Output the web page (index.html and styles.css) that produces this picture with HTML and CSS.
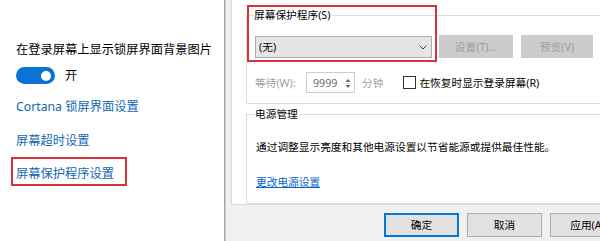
FILE: index.html
```html
<!DOCTYPE html>
<html lang="zh-CN">
<head>
<meta charset="utf-8">
<title>屏幕保护程序设置</title>
<link rel="stylesheet" href="styles.css">
</head>
<body>
<div class="screen">
  <section class="settings">
    <div class="title">在登录屏幕上显示锁屏界面背景图片</div>
    <div class="toggle-row">
      <span class="toggle"><span class="knob"></span></span>
      <span class="toggle-label">开</span>
    </div>
    <a class="link l-cortana">Cortana 锁屏界面设置</a>
    <a class="link l-timeout">屏幕超时设置</a>
    <a class="link l-saver">屏幕保护程序设置</a>
  </section>
  <div class="sep"></div>
  <section class="dialog">
    <div class="page">
      <div class="group g-saver">
        <span class="glabel">屏幕保护程序(S)</span>
        <div class="row1">
          <div class="combo"><span>(无)</span>
            <svg class="chev" width="8" height="5" viewBox="0 0 8 5"><path d="M0.5 0.5 L4 4 L7.5 0.5" fill="none" stroke="#444" stroke-width="1"/></svg>
          </div>
          <div class="btn dis b-set">设置(T)...</div>
          <div class="btn dis b-prev">预览(V)</div>
        </div>
        <div class="row2">
          <span class="wait">等待(W):</span>
          <div class="spin">
            <span class="num">9999</span>
            <span class="arrows">
              <svg width="12" height="18" viewBox="0 0 12 18"><path d="M3.5 8 L6 5 L8.5 8 Z" fill="#666"/><path d="M3.5 11 L6 14 L8.5 11 Z" fill="#666"/><line x1="1" y1="9.5" x2="11" y2="9.5" stroke="#e2e2e2"/></svg>
            </span>
          </div>
          <span class="min">分钟</span>
          <span class="check"></span>
          <span class="check-label">在恢复时显示登录屏幕(R)</span>
        </div>
        <div class="highlight"></div>
      </div>
      <div class="group g-power">
        <span class="glabel">电源管理</span>
        <p class="desc">通过调整显示亮度和其他电源设置以节省能源或提供最佳性能。</p>
        <a class="plink">更改电源设置</a>
      </div>
    </div>
    <div class="buttons">
      <div class="btn b-ok">确定</div>
      <div class="btn">取消</div>
      <div class="btn">应用(A)</div>
    </div>
  </section>
</div>
</body>
</html>
```

FILE: styles.css
```css
html, body {
  margin: 0;
  padding: 0;
  width: 600px;
  height: 241px;
  overflow: hidden;
  background: #ffffff;
}
body {
  font-family: "Noto Sans", "Noto Sans CJK SC", sans-serif;
}
.screen {
  display: flex;
  width: 600px;
  height: 241px;
  overflow: hidden;
}

/* left settings pane */
.settings {
  width: 224px;
  flex: none;
  background: #ffffff;
  display: flex;
  flex-direction: column;
  align-items: flex-start;
  padding: 42px 0 0 16px;
  box-sizing: border-box;
  font-size: 12.25px;
  line-height: 16px;
  color: #000;
}
.title { white-space: nowrap; }
.toggle-row {
  display: flex;
  align-items: center;
  margin-top: 9px;
  height: 17px;
}
.toggle {
  width: 39px;
  height: 17px;
  border-radius: 9px;
  background: #0a74d4;
  display: flex;
  align-items: center;
  justify-content: flex-end;
  padding-right: 4px;
  box-sizing: border-box;
}
.knob {
  width: 10px;
  height: 10px;
  border-radius: 50%;
  background: #fff;
}
.toggle-label { margin-left: 10px; }
.link {
  color: #1267b3;
  white-space: nowrap;
}
.l-cortana { margin-top: 15px; }
.l-timeout { margin-top: 18px; }
.l-saver {
  margin-top: 8px;
  margin-left: -5px;
  border: 2px solid #d7343a;
  padding: 7px 11px 2px 3px;
}

.sep {
  width: 1px;
  flex: none;
  background: #a3a3a3;
  border-right: 1px solid #cfcfcf;
}

/* dialog */
.dialog {
  width: 420px;
  flex: none;
  background: #f0f0f0;
  padding-left: 5px;
  font-size: 10.7px;
  line-height: 14px;
  color: #000;
}
.page {
  background: #ffffff;
  border-left: 1px solid #dadada;
  border-bottom: 1px solid #dadada;
  padding: 15px 0 15px 14px;
  height: 205px;
  box-sizing: border-box;
}
.group {
  border: 1px solid #dcdcdc;
  border-right: none;
  padding-left: 8px;
  position: relative;
}
.glabel {
  display: inline-block;
  margin-top: -8px;
  margin-left: -1px;
  padding: 0 2px 0 0;
  background: #fff;
  vertical-align: top;
}
.g-saver { padding-bottom: 10px; }
.row1 {
  display: flex;
  align-items: flex-start;
  margin-top: 5px;
}
.combo {
  width: 177px;
  height: 22px;
  margin-top: 1px;
  box-sizing: border-box;
  border: 1px solid #adadad;
  background: #e5e5e5;
  display: flex;
  align-items: center;
  justify-content: space-between;
  padding: 0 4px 0 3px;
}
.chev { margin-right: 0; }
.btn {
  height: 23px;
  box-sizing: border-box;
  border: 1px solid #adadad;
  background: #e1e1e1;
  display: flex;
  align-items: center;
  justify-content: center;
  width: 75px;
  flex: none;
}
.btn.dis {
  background: #cccccc;
  border-color: #cccccc;
  color: #9d9d9d;
}
.b-set { margin-left: 7px; width: 74px; }
.b-prev { margin-left: 8px; width: 72px; }
.row2 {
  display: flex;
  align-items: center;
  margin-top: 14px;
  height: 21px;
}
.wait { width: 51px; color: #a0a0a0; white-space: nowrap; }
.spin {
  width: 49px;
  height: 21px;
  box-sizing: border-box;
  border: 1px solid #cccccc;
  display: flex;
  align-items: center;
  justify-content: space-between;
  padding-left: 6px;
}
.num { color: #6d6d6d; }
.arrows { display: flex; align-items: center; }
.min { margin-left: 7px; color: #a0a0a0; }
.check {
  width: 11px;
  height: 11px;
  border: 1px solid #333;
  margin-left: 20px;
  background: #fff;
}
.check-label { margin-left: 3px; white-space: nowrap; }
.highlight {
  position: absolute;
  left: 0;
  top: -11px;
  width: 186px;
  height: 53px;
  border: 2px solid #d7343a;
}
.g-power {
  margin-top: 10px;
  padding-bottom: 14px;
  padding-left: 9px;
}
.g-power .glabel { margin-left: -1px; }
.desc { margin: 11px 0 0; white-space: nowrap; }
.plink {
  display: inline-block;
  margin-top: 21px;
  color: #0066cc;
  text-decoration: underline;
}

.buttons {
  display: flex;
  gap: 8px;
  padding-left: 153px;
  margin-top: 8px;
}
.buttons .btn { height: 24px; width: 75px; }
.b-ok { border: 1px solid #0078d7; box-shadow: inset 0 0 0 1px #0078d7; }
```
